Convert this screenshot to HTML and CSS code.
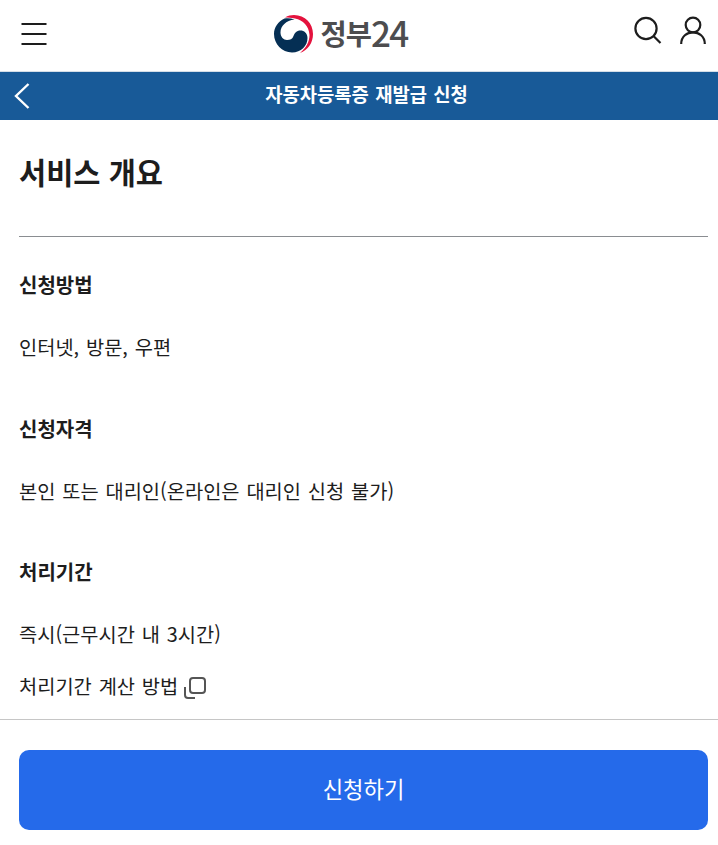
FILE: index.html
```html
<!DOCTYPE html>
<html lang="ko">
<head>
<meta charset="utf-8">
<meta name="viewport" content="width=device-width, initial-scale=1">
<title>자동차등록증 재발급 신청</title>
<link rel="stylesheet" href="styles.css">
</head>
<body>
<header class="header">
  <button class="icon-button" aria-label="메뉴">
    <svg width="26" height="24" viewBox="0 0 26 24"><path d="M.5 2h25M.5 12h25M.5 22h25"/></svg>
  </button>
  <div class="logo">
    <svg class="logo-mark" width="40" height="40" viewBox="0 0 40 40">
      <path class="mark-red" d="M11 3.500C14 1.700 17 1 20 1C31 1 39 9.500 39 20C39 29 34 36 26 39C32 34 35.500 28 35.500 21C35 12 29 6 21 4.500C17 3.500 14 3.500 11 3.500Z"/>
      <path class="mark-navy" d="M10.500 4.500C4 7.500 0 13.500 0 20C0 30 8 38.500 18 38.500C27 38.500 33.500 32 33.500 24C33.500 19 30 16.500 26.500 16.500C22.500 16.500 20.500 19 19.500 22C18.500 25 16 26 13 26C9.500 26 6.500 23 6.500 18.500C6.500 12 12 6.500 20.500 5.500C17 4.300 14 4 10.500 4.500Z"/>
    </svg>
    <span class="logo-name">정부</span><span class="logo-number">24</span>
  </div>
  <div class="actions">
    <button class="icon-button" aria-label="검색">
      <svg width="28" height="28" viewBox="0 0 28 28"><circle cx="12" cy="12.500" r="10.600"/><path d="M19.500 20l7 7"/></svg>
    </button>
    <button class="icon-button" aria-label="로그인">
      <svg width="26" height="28" viewBox="0 0 26 28"><circle cx="13" cy="9" r="7.300"/><path d="M1.200 28C1.200 12.500 24.800 12.500 24.800 28"/></svg>
    </button>
  </div>
</header>
<nav class="title-bar">
  <a class="back" href="#" aria-label="뒤로"><svg width="16" height="26" viewBox="0 0 16 26"><path d="M14.500 1L2 13l12.500 12"/></svg></a>
  <h1 class="page-title">자동차등록증 재발급 신청</h1>
</nav>
<main class="content">
  <h2 class="overview-title">서비스 개요</h2>
  <section class="item">
    <h3 class="label">신청방법</h3>
    <p class="value">인터넷, 방문, 우편</p>
  </section>
  <section class="item">
    <h3 class="label">신청자격</h3>
    <p class="value">본인 또는 대리인(온라인은 대리인 신청 불가)</p>
  </section>
  <section class="item">
    <h3 class="label">처리기간</h3>
    <p class="value">즉시(근무시간 내 3시간)</p>
    <p class="value help">처리기간 계산 방법
      <svg class="popup-icon" width="22" height="22" viewBox="0 0 22 22"><rect x="6" y="1" width="15" height="15" rx="3"/><path d="M1 10v8q0 3 3 3h7"/></svg>
    </p>
  </section>
</main>
<footer class="footer">
  <button class="apply">신청하기</button>
</footer>
</body>
</html>
```

FILE: styles.css
```css
* { box-sizing: border-box; margin: 0; padding: 0; }
body {
  height: 845px;
  display: flex;
  flex-direction: column;
  background: #fff;
  color: #1d1d1d;
  font-family: "Noto Sans CJK KR", sans-serif;
  overflow: hidden;
}
button { border: 0; background: none; font: inherit; }
svg { display: block; fill: none; stroke: #1d1d1d; stroke-width: 2.2; }
.header {
  height: 72px;
  padding: 0 12px 4px 21px;
  display: grid;
  grid-template-columns: 1fr auto 1fr;
  align-items: center;
  border-bottom: 1px solid #d5dee7;
}
.icon-button { display: block; width: max-content; }
.logo { display: flex; align-items: center; height: 40px; margin: 0 23px 0 -23px; color: #4d4d4f; line-height: 38px; }
.logo-mark { stroke: none; margin-right: 7px; }
.mark-red { fill: #e4123d; }
.mark-navy { fill: #052f54; }
.logo-name { font-size: 28.5px; font-weight: 700; letter-spacing: -1px; padding-bottom: 1px; }
.logo-number { font-size: 35px; font-weight: 500; letter-spacing: -1.8px; padding-bottom: 3px; }
.actions { display: flex; justify-content: flex-end; gap: 18px; padding: 0 0 8px; }
.title-bar {
  height: 48px;
  display: grid;
  grid-template-columns: 45px 1fr 30px;
  align-items: center;
  background: #185a98;
  color: #fff;
}
.back { padding-left: 14px; }
.back svg { stroke: #fff; stroke-width: 2.4; }
.page-title { font-size: 18.8px; line-height: 28px; font-weight: 700; text-align: center; word-spacing: 1px; padding-bottom: 5px; }
.content { height: 599px; padding: 0 10px 0 19px; }
.overview-title { height: 117px; padding-top: 31px; border-bottom: 1px solid #8a8d91; font-size: 29.5px; line-height: 40px; font-weight: 700; }
.item { padding-top: 33px; }
.item + .item { padding-top: 52px; }
.item:last-child { padding-top: 51px; }
.label { font-size: 20px; line-height: 30px; font-weight: 700; }
.value { margin-top: 32px; font-size: 19.8px; line-height: 30px; word-spacing: 1.3px; }
.help { margin-top: 22px; display: flex; align-items: center; gap: 6px; }
.popup-icon { stroke: #555; stroke-width: 2; margin-top: 3px; }
.footer { flex: 1; padding: 30px 10px 0 19px; border-top: 1px solid #c6c6c6; }
.apply { display: block; width: 100%; height: 80px; padding-bottom: 5px; border-radius: 10px; background: #256aea; color: #fff; font-size: 22.2px; line-height: 32px; }
```
